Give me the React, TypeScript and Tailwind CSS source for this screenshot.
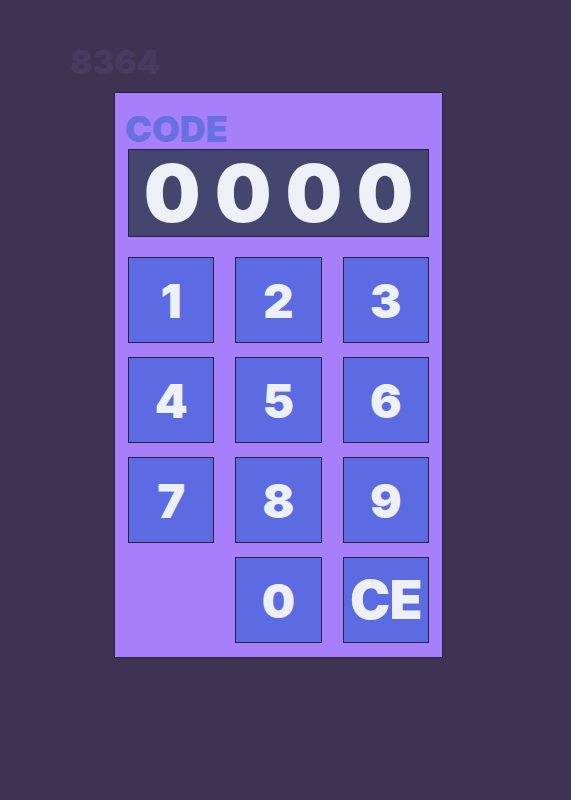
import React from "react";

const keys = ["1", "2", "3", "4", "5", "6", "7", "8", "9", "", "0", "CE"];

export default function App() {
  return (
    <div
      className="w-[571px] h-[800px] bg-[#3e3352] flex flex-col"
      style={{ fontFamily: "Inter, 'DejaVu Sans', sans-serif" }}
    >
      <div className="pl-[70px] pt-[46px] h-[92px] text-[33px] font-black leading-none text-[#473c5f]">
        8364
      </div>
      <div className="ml-[114px] w-[329px] h-[566px] bg-[#a87ffb] border border-[#2a2340] px-[13px] pt-[18px]">
        <div className="text-[36px] font-black leading-none text-[#6670e2] h-[38px] -ml-[3px]">CODE</div>
        <div className="h-[88px] bg-[#454670] border border-[#2a2340] flex items-center justify-center gap-[14px] text-[80px] font-black leading-none text-[#eef0f7]">
          <span>0</span>
          <span>0</span>
          <span>0</span>
          <span>0</span>
        </div>
        <div className="grid grid-cols-3 gap-x-[21px] gap-y-[14px] mt-[20px]">
          {keys.map((k, i) =>
            k === "" ? (
              <div key={i} className="h-[86px]" />
            ) : (
              <div
                key={i}
                className={`h-[86px] bg-[#5c6be1] border border-[#2a2340] flex items-center justify-center text-[#eef0f7] font-black leading-none ${
                  k === "CE" ? "text-[54px] tracking-[-1px]" : "text-[47px]"
                }`}
              >
                {k}
              </div>
            )
          )}
        </div>
      </div>
    </div>
  );
}
